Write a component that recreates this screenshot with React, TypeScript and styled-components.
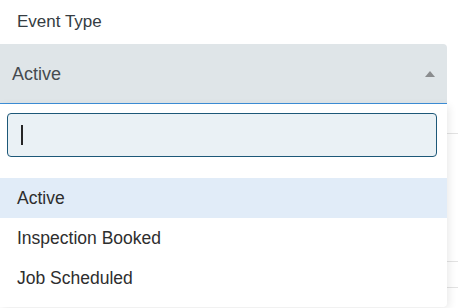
import React from "react";
import styled, { createGlobalStyle } from "styled-components";

const GlobalStyle = createGlobalStyle`
  html, body {
    margin: 0;
    padding: 0;
    background: #ffffff;
    font-family: "Liberation Sans", Arial, sans-serif;
  }
  * { box-sizing: border-box; }
`;

const Page = styled.div`
  position: relative;
  width: 458px;
  height: 308px;
  overflow: hidden;
  background: #ffffff;
`;

const FieldLabel = styled.div`
  height: 44px;
  padding: 12px 0 0 17px;
  font-size: 17px;
  line-height: 20px;
  color: #353c42;
`;

const SelectBar = styled.div`
  width: 447px;
  height: 60px;
  display: flex;
  align-items: center;
  justify-content: space-between;
  padding: 1px 12px 0 12px;
  background: #dfe5e8;
  border-bottom: 1px solid #3d8fd9;
  border-top-right-radius: 4px;
  font-size: 18px;
  color: #454a4f;
`;

const Caret = styled.span`
  width: 0;
  height: 0;
  border-left: 5px solid transparent;
  border-right: 5px solid transparent;
  border-bottom: 6px solid #8a8c8e;
`;

const Underlay = styled.div`
  display: flex;
  flex-direction: column;
`;

const UnderRow = styled.div<{ $h: number }>`
  height: ${(p) => p.$h}px;
  border-bottom: 1px solid #e3e3e3;
`;

const Dropdown = styled.div`
  position: absolute;
  top: 104px;
  left: 0;
  width: 447px;
  height: 203px;
  display: flex;
  flex-direction: column;
  padding: 9px 0 8px;
  background: #ffffff;
  border-bottom-right-radius: 4px;
  box-shadow: 2px 2px 8px rgba(0, 0, 0, 0.09);
`;

const SearchBox = styled.div`
  margin: 0 10px 0 7px;
  height: 44px;
  display: flex;
  align-items: center;
  padding-left: 13px;
  background: #eaf1f5;
  border: 1px solid #1d5878;
  border-radius: 4px;
`;

const TextCursor = styled.span`
  width: 2px;
  height: 20px;
  background: #262626;
`;

const OptionList = styled.ul`
  list-style: none;
  margin: 21px 0 0;
  padding: 0;
`;

const Option = styled.li<{ $active?: boolean }>`
  height: 40px;
  display: flex;
  align-items: center;
  padding-left: 17px;
  font-size: 17.5px;
  color: #2e2e2e;
  background: ${(p) => (p.$active ? "#e1ecf8" : "transparent")};
`;

const options = ["Active", "Inspection Booked", "Job Scheduled"];

export default function App() {
  return (
    <Page>
      <GlobalStyle />
      <FieldLabel>Event Type</FieldLabel>
      <SelectBar>
        <span>Active</span>
        <Caret />
      </SelectBar>
      <Underlay>
        <UnderRow $h={30} />
        <UnderRow $h={128} />
        <UnderRow $h={26} />
      </Underlay>
      <Dropdown>
        <SearchBox>
          <TextCursor />
        </SearchBox>
        <OptionList>
          {options.map((o, i) => (
            <Option key={o} $active={i === 0}>
              {o}
            </Option>
          ))}
        </OptionList>
      </Dropdown>
    </Page>
  );
}
